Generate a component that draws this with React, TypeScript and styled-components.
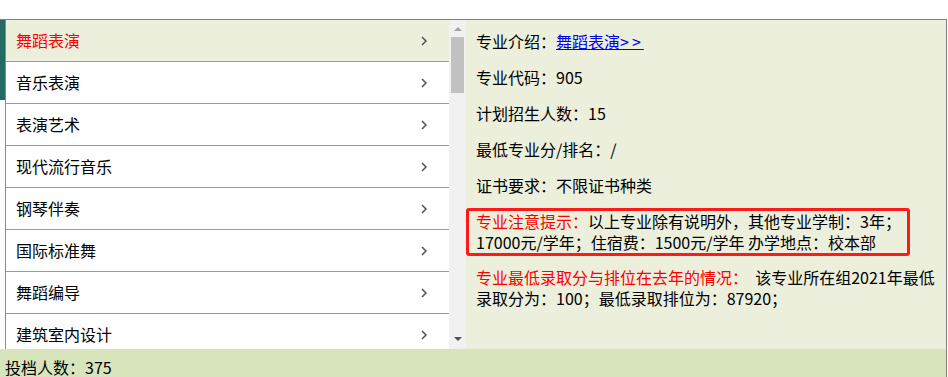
import React from "react";
import styled, { createGlobalStyle } from "styled-components";

const Global = createGlobalStyle`
  html, body { margin: 0; padding: 0; background: #ffffff; overflow: hidden; }
  body { font-family: "Microsoft YaHei", "Noto Sans CJK SC", sans-serif; font-size: 16px; color: #000; }
`;

const Frame = styled.div`
  margin-top: 19px;
  width: 947px;
  border-top: 1px solid #808080;
  border-right: 1px solid #808080;
  box-sizing: border-box;
`;

const Main = styled.div`
  display: flex;
  height: 329px;
`;

const AccentCol = styled.div`
  width: 5px;
  flex: none;
`;

const Accent = styled.div`
  height: 80px;
  background: #246a63;
`;

const ListBox = styled.div`
  display: flex;
  width: 461px;
  flex: none;
  border-left: 1px solid #8a8a8a;
  box-sizing: border-box;
  overflow: hidden;
`;

const Rows = styled.ul`
  list-style: none;
  margin: 0;
  padding: 0;
  flex: 1;
  overflow: hidden;
`;

const Row = styled.li<{ $active?: boolean }>`
  display: flex;
  align-items: center;
  justify-content: space-between;
  height: 41px;
  padding: 0 22px 0 10px;
  border-bottom: 1px solid #9a9a9a;
  background: ${(p) => (p.$active ? "#ebefdc" : "#ffffff")};
  color: ${(p) => (p.$active ? "#ff0000" : "#000000")};
  line-height: 21px;
`;

const Scrollbar = styled.div`
  position: relative;
  width: 17px;
  flex: none;
  background: #f1f1f1;
`;

const Thumb = styled.div`
  position: absolute;
  left: 2px;
  right: 2px;
  top: 17px;
  height: 56px;
  background: #c1c1c1;
`;

const Arrow = styled.div<{ $down?: boolean }>`
  position: absolute;
  left: 5px;
  width: 0;
  height: 0;
  border-left: 4px solid transparent;
  border-right: 4px solid transparent;
  ${(p) =>
    p.$down
      ? `bottom: 8px; border-top: 4px solid #505050;`
      : `top: 7px; border-bottom: 4px solid #a3a3a3;`}
`;

const Panel = styled.div`
  flex: 1;
  background: #ebefdc;
  padding: 11px 10px 0 10px;
  box-sizing: border-box;
`;

const Item = styled.div`
  line-height: 21px;
  margin-bottom: 15px;
`;

const Link = styled.a`
  color: #0000ee;
  text-decoration: underline;
`;

const Arrows = styled.span`
  letter-spacing: 3px;
`;

const Notice = styled.div`
  margin: -3px 0 0 -10px;
  width: 444px;
  box-sizing: border-box;
  border: 3px solid #ff1a1a;
  border-radius: 3px;
  padding: 0 0 0 7px;
  line-height: 21px;
`;

const Red = styled.span`
  color: #ff0000;
`;

const Situation = styled.div`
  margin-top: 11px;
  line-height: 21px;
`;

const Footer = styled.div`
  background: #d8e4bc;
  height: 40px;
  padding: 8px 0 0 5px;
  box-sizing: border-box;
  line-height: 21px;
`;

const Chevron = () => (
  <svg width="6" height="10" viewBox="0 0 6 10" aria-hidden="true">
    <polyline points="1,1 5,5 1,9" fill="none" stroke="#505050" strokeWidth="1.5" />
  </svg>
);

const majors = [
  "舞蹈表演",
  "音乐表演",
  "表演艺术",
  "现代流行音乐",
  "钢琴伴奏",
  "国际标准舞",
  "舞蹈编导",
  "建筑室内设计",
  "环境艺术设计",
];

export default function App() {
  return (
    <>
      <Global />
      <Frame>
        <Main>
          <AccentCol>
            <Accent />
          </AccentCol>
          <ListBox>
            <Rows>
              {majors.map((m, i) => (
                <Row key={m} $active={i === 0}>
                  <span>{m}</span>
                  <Chevron />
                </Row>
              ))}
            </Rows>
            <Scrollbar>
              <Arrow />
              <Thumb />
              <Arrow $down />
            </Scrollbar>
          </ListBox>
          <Panel>
            <Item>
              专业介绍：<Link href="#">舞蹈表演<Arrows>&gt;&gt;</Arrows></Link>
            </Item>
            <Item>专业代码：905</Item>
            <Item>计划招生人数：15</Item>
            <Item>最低专业分/排名：/</Item>
            <Item>证书要求：不限证书种类</Item>
            <Notice>
              <Red>专业注意提示：</Red>以上专业除有说明外，其他专业学制：3年；17000元/学年；住宿费：1500元/学年 办学地点：校本部
            </Notice>
            <Situation>
              <Red>专业最低录取分与排位在去年的情况：</Red>&nbsp;&nbsp;该专业所在组2021年最低录取分为：100；最低录取排位为：87920；
            </Situation>
          </Panel>
        </Main>
        <Footer>投档人数：375</Footer>
      </Frame>
    </>
  );
}
